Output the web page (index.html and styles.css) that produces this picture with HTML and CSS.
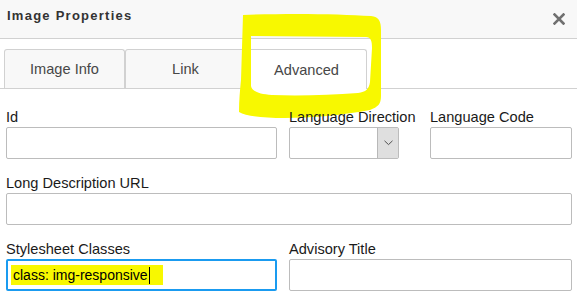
FILE: index.html
```html
<!DOCTYPE html>
<html>
<head>
<meta charset="utf-8">
<link rel="stylesheet" href="styles.css">
</head>
<body>
<div class="dialog">
  <div class="header">
    <span class="title">Image Properties</span>
    <svg class="close" width="12" height="12" viewBox="0 0 12 12"><path d="M1.5 1.5 L10.5 10.5 M10.5 1.5 L1.5 10.5" stroke="#707070" stroke-width="2.6" stroke-linecap="square"/></svg>
  </div>
  <div class="tabs">
    <div class="tab">Image Info</div>
    <div class="tab">Link</div>
    <div class="tab active">Advanced</div>
  </div>
  <div class="form">
    <div class="row">
      <div class="field f-id"><label>Id</label><div class="input"></div></div>
      <div class="field f-dir"><label>Language Direction</label>
        <div class="input select"><div class="btn"><svg width="9" height="6" viewBox="0 0 9 6"><path d="M0.5 0.8 L4.5 4.6 L8.5 0.8" fill="none" stroke="#505050" stroke-width="1"/></svg></div></div>
      </div>
      <div class="field f-code"><label>Language Code</label><div class="input"></div></div>
    </div>
    <div class="row">
      <div class="field f-url"><label>Long Description URL</label><div class="input"></div></div>
    </div>
    <div class="row">
      <div class="field f-css"><label>Stylesheet Classes</label>
        <div class="input focus"><span class="hl">class: img-responsive<span class="caret"></span></span></div>
      </div>
      <div class="field f-adv"><label>Advisory Title</label><div class="input"></div></div>
    </div>
  </div>
  <svg class="scribble" width="577" height="303" viewBox="0 0 577 303">
    <path fill-rule="evenodd" fill="#f8f800" d="M243,15 C290,13 340,14 371,16 C379,17 381,21 381,30 L381,96 C381,104 378,107 370,110 C345,115 310,118 285,118 C262,118 246,116 239,112 C239,100 240,90 241,80 L243,15 Z M251,36 L366,37 C371,37 372,41 372,48 L370,82 C369,89 366,92 358,93 C330,95 300,96 272,95 C258,94 252,91 251,86 Z"/>
  </svg>
</div>
</body>
</html>
```

FILE: styles.css
```css
body {
  margin: 0;
  font-family: "Liberation Sans", Arial, sans-serif;
  background: #fff;
}

.dialog {
  position: relative;
  width: 577px;
  height: 303px;
  overflow: hidden;
  background: #fff;
}

.header {
  height: 39px;
  box-sizing: border-box;
  border-bottom: 1px solid #d1d1d1;
  background: #f8f8f8;
  display: flex;
  align-items: flex-start;
  justify-content: space-between;
  padding: 7px 0 0 7px;
}

.title {
  font-size: 13px;
  font-weight: bold;
  letter-spacing: 1.25px;
  line-height: 18px;
  color: #333;
}

.close {
  margin: 6px 12px 0 0;
}

.tabs {
  display: flex;
  align-items: flex-end;
  padding: 10px 0 0 4px;
  border-bottom: 1px solid #d1d1d1;
  height: 39px;
}

.tab {
  width: 121px;
  height: 39px;
  box-sizing: border-box;
  border: 1px solid #d1d1d1;
  border-bottom: none;
  border-radius: 3px 3px 0 0;
  background: #f8f8f8;
  color: #474747;
  font-size: 14.6px;
  display: flex;
  align-items: center;
  justify-content: center;
}

.tab.active {
  background: #fff;
  height: 40px;
  margin-bottom: -1px;
}

.form {
  padding: 19px 5px 0 6px;
}

.row {
  display: flex;
  gap: 12px;
}

.row + .row {
  margin-top: 15px;
}

.field label {
  display: block;
  position: relative;
  z-index: 2;
  font-size: 14.6px;
  line-height: 18px;
  color: #1a1a1a;
  margin-bottom: 1px;
  white-space: nowrap;
}

.input {
  height: 32px;
  box-sizing: border-box;
  border: 1px solid #bcbcbc;
  border-radius: 2px;
  background: #fff;
}

.f-id { width: 271px; }
.f-dir { width: 129px; }
.f-code { width: 142px; }
.f-url { flex: 1; }
.f-css { width: 271px; }
.f-adv { flex: 1; }

.select {
  width: 110px;
  display: flex;
  justify-content: flex-end;
}

.select .btn {
  width: 20px;
  height: 100%;
  background: #dfdfdf;
  border-left: 1px solid #b8b8b8;
  display: flex;
  align-items: center;
  justify-content: center;
}

.input.focus {
  border: 2px solid #1a9bf0;
  display: flex;
  align-items: center;
  padding-left: 3px;
}

.hl {
  background: #f8f800;
  font-size: 14px;
  line-height: 20px;
  color: #000;
  padding: 0 13px 0 2px;
  display: inline-flex;
  align-items: center;
}

.caret {
  display: inline-block;
  width: 1px;
  height: 17px;
  background: #000;
  margin-left: 1px;
}

.scribble {
  position: absolute;
  left: 0;
  top: 0;
  z-index: 1;
  pointer-events: none;
}
```
